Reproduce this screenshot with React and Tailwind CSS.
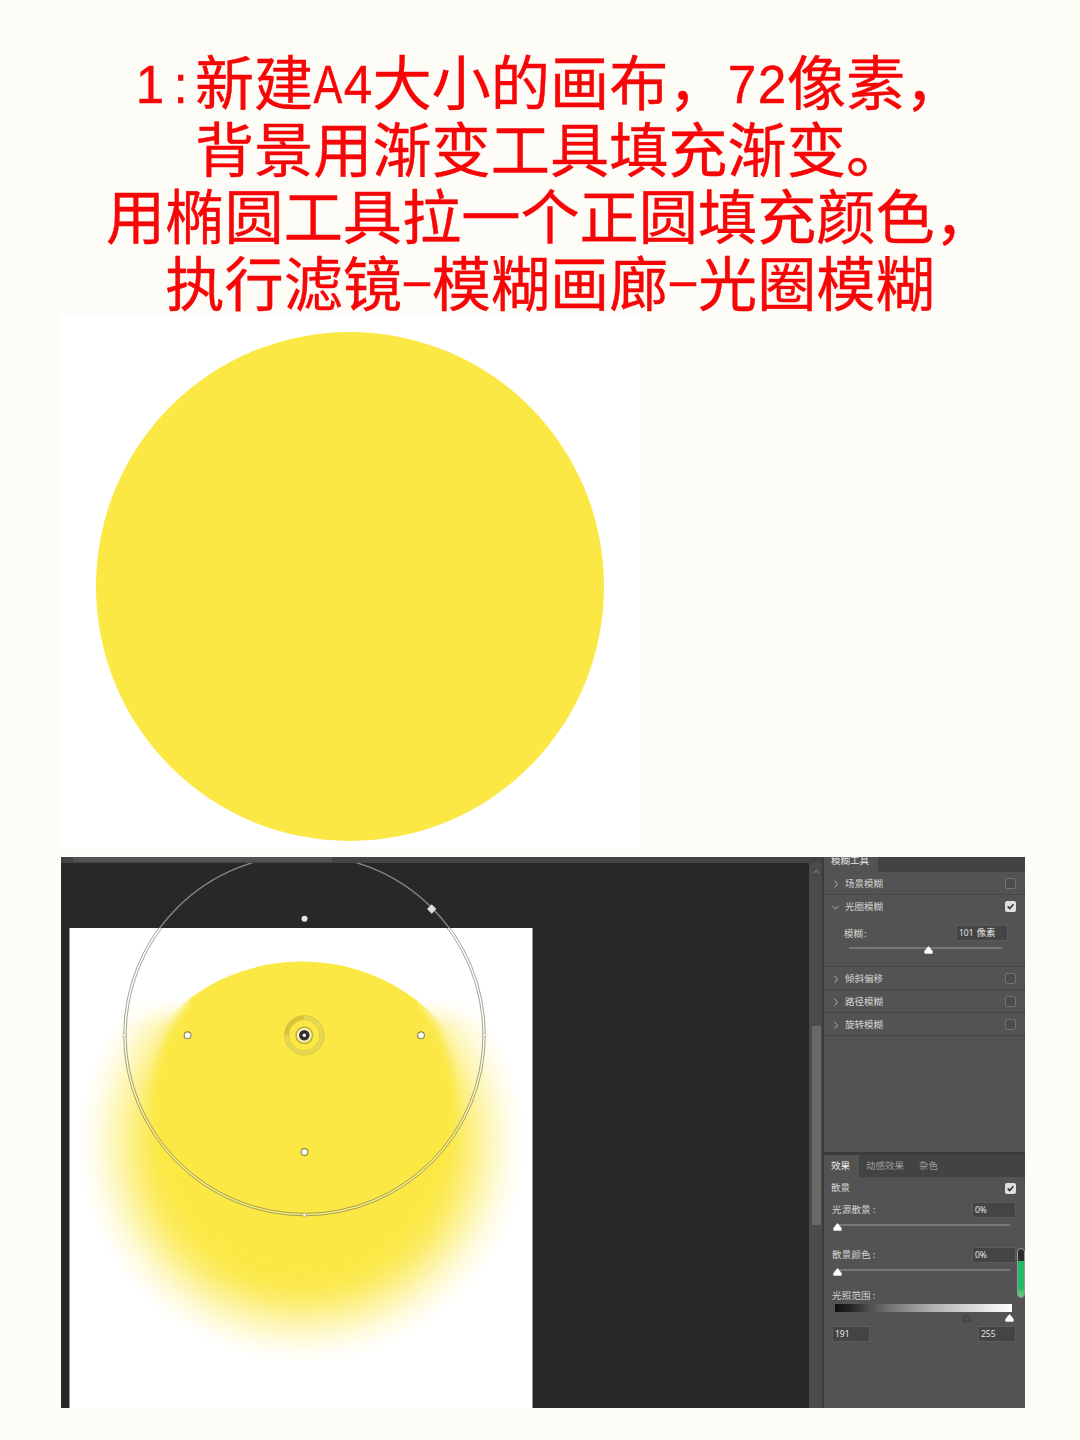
import React from "react";

function Half({ children, wide, dash }) {
  return (
    <span className="inline-flex w-[29.6px] justify-center font-['Liberation_Sans',sans-serif] text-[54px]">
      <span
        className={
          dash
            ? "inline-block -translate-y-[6px] scale-x-[1.95] scale-y-[0.85]"
            : wide
              ? "inline-block -translate-y-[2px] scale-x-[0.8]"
              : "inline-block -translate-y-[2px] scale-x-[0.95]"
        }
      >
        {children}
      </span>
    </span>
  );
}

function Line({ children }) {
  return <div className="flex h-[67px] items-baseline justify-center whitespace-nowrap">{children}</div>;
}

function Title() {
  return (
    <h1 className="ml-[20px] h-[268px] text-[59.2px] leading-[67px] font-normal text-[#f60606] [-webkit-text-stroke:0.4px_#f60606]">
      <Line>
        <Half>1</Half><Half>:</Half>新建<Half wide>A</Half><Half>4</Half>大小的画布，<Half>7</Half><Half>2</Half>像素，
      </Line>
      <Line>背景用渐变工具填充渐变。</Line>
      <Line>用椭圆工具拉一个正圆填充颜色，</Line>
      <Line>
        执行滤镜<Half dash>-</Half>模糊画廊<Half dash>-</Half>光圈模糊
      </Line>
    </h1>
  );
}

function Artwork() {
  return (
    <svg className="block h-[545px] w-[748px]" viewBox="61 863 748 545">
      <defs>
        <filter id="soft" x="-20%" y="-20%" width="140%" height="140%"><feGaussianBlur stdDeviation="4" /></filter>
        <radialGradient id="halo">
          <stop offset="0.58" stopColor="#fbe845" />
          <stop offset="0.66" stopColor="#fbe845" stopOpacity="0.93" />
          <stop offset="0.72" stopColor="#fbe845" stopOpacity="0.78" />
          <stop offset="0.78" stopColor="#fbe845" stopOpacity="0.57" />
          <stop offset="0.84" stopColor="#fbe845" stopOpacity="0.36" />
          <stop offset="0.9" stopColor="#fbe845" stopOpacity="0.18" />
          <stop offset="0.95" stopColor="#fbe845" stopOpacity="0.07" />
          <stop offset="1" stopColor="#fbe845" stopOpacity="0" />
        </radialGradient>
        <linearGradient id="fade" x1="0" y1="997" x2="0" y2="1026" gradientUnits="userSpaceOnUse">
          <stop offset="0" stopColor="#000" />
          <stop offset="1" stopColor="#fff" />
        </linearGradient>
        <mask id="lower" maskUnits="userSpaceOnUse" x="61" y="863" width="748" height="545">
          <rect x="61" y="863" width="748" height="545" fill="url(#fade)" />
        </mask>
        <mask id="focus" maskUnits="userSpaceOnUse" x="61" y="863" width="748" height="545">
          <ellipse cx="304" cy="1107" rx="152" ry="166" fill="#fff" filter="url(#soft)" />
          <rect x="190" y="940" width="228" height="75" fill="#fff" />
        </mask>
        <clipPath id="page"><rect x="69.5" y="928" width="463" height="480" /></clipPath>
        <clipPath id="dark"><rect x="61" y="863" width="748" height="65" /></clipPath>
      </defs>
      <rect x="61" y="863" width="748" height="545" fill="#282828" />
      <rect x="69.5" y="928" width="463" height="480" fill="#fff" />
      <g mask="url(#lower)">
        <ellipse cx="302" cy="1142" rx="224" ry="221" fill="url(#halo)" />
      </g>
      <g mask="url(#focus)">
        <circle cx="302" cy="1150" r="188.5" fill="#fbe845" />
      </g>
      <circle cx="304.5" cy="1035" r="180" fill="none" stroke="#868686" strokeWidth="1.4" clipPath="url(#dark)" />
      <g clipPath="url(#page)" fill="none">
        <circle cx="304.5" cy="1035" r="179.5" stroke="#fff" strokeOpacity=".25" strokeWidth="2" />
        <circle cx="304.5" cy="1035" r="180.8" stroke="#77775f" strokeOpacity=".75" strokeWidth=".9" />
        <circle cx="304.5" cy="1035" r="178.4" stroke="#77775f" strokeOpacity=".75" strokeWidth=".9" />
      </g>
      {[[124.5, 1035], [484.5, 1035], [304.5, 1215]].map(([x, y]) => (
        <circle key={x} cx={x} cy={y} r="1.7" fill="#fff" stroke="#99967a" strokeWidth=".5" />
      ))}
      <rect x="428.4" y="905.7" width="6.6" height="6.6" fill="#dedede" transform="rotate(45 431.7 909)" />
      <circle cx="304.5" cy="918.7" r="3" fill="#e4e4e4" />
      {[[187.6, 1035.3], [421, 1035.3], [304.5, 1152]].map(([x, y]) => (
        <circle key={x} cx={x} cy={y} r="3.4" fill="#fff" stroke="#8d8748" strokeWidth="1.1" />
      ))}
      <circle cx="304.3" cy="1035.3" r="17.7" fill="none" stroke="#e6d755" strokeWidth="4" />
      <path d="M286.6 1035.3A17.7 17.7 0 0 1 304.3 1017.6" fill="none" stroke="#d9c53b" strokeWidth="4" />
      <circle cx="304.3" cy="1035.3" r="19.7" fill="none" stroke="#bda932" strokeOpacity=".5" strokeWidth=".8" />
      <circle cx="304.3" cy="1035.3" r="15.5" fill="none" stroke="#bda932" strokeOpacity=".5" strokeWidth=".8" />
      <circle cx="304.3" cy="1035.3" r="9" fill="#a8982c" fillOpacity=".7" />
      <circle cx="304.3" cy="1035.3" r="7.3" fill="#fff8cf" />
      <circle cx="304.3" cy="1035.3" r="5.3" fill="#33312a" />
      <circle cx="304.3" cy="1035.3" r="1.7" fill="#fff" />
    </svg>
  );
}

function Check({ on }) {
  return on ? (
    <span className="flex size-[11px] shrink-0 items-center justify-center rounded-[2px] bg-[#e0e0e0]">
      <svg className="size-[9px]" viewBox="0 0 9 9"><path d="M1.7 4.4l2 2.1 3.7-4.2" fill="none" stroke="#333" strokeWidth="1.6" /></svg>
    </span>
  ) : (
    <span className="size-[11px] shrink-0 rounded-[2px] border border-[#737373] bg-[#4c4c4c]" />
  );
}

function Row({ label, on, open }) {
  return (
    <div className="flex h-[22px] items-center pt-px pr-[9px] pl-[8px]">
      <svg className="size-[8px] shrink-0" viewBox="0 0 8 8">
        <path d={open ? "M.4 3l3 3 3-3" : "M2.5 .8l3 3.4-3 3.4"} fill="none" stroke="#b0b0b0" />
      </svg>
      <span className="ml-[5px] flex-1 -translate-y-[1.5px]">{label}</span>
      <Check on={on} />
    </div>
  );
}

function Thumb({ hollow }) {
  return (
    <svg className="block h-[8px] w-[9px]" viewBox="0 0 9 8">
      <path d="M4.5 .6L8.2 5v2.3H.8V5z" fill={hollow ? "#505050" : "#fff"} stroke={hollow ? "#333" : "#fff"} strokeWidth=".8" strokeLinejoin="round" />
    </svg>
  );
}

function Field({ children, className }) {
  return (
    <span className={"flex h-[16px] items-center border border-[#5b5b5b] bg-[#444] pl-[2px] font-['Noto_Sans','Noto_Sans_CJK_SC',sans-serif] text-[8.5px] text-[#e4e4e4] " + className}>
      {children}
    </span>
  );
}

function Slider({ label }) {
  return (
    <div className="h-[45px] shrink-0">
      <div className="flex h-[16px] items-center justify-between pr-[9px] pl-[8px]">
        <span className="-translate-y-px tracking-[0.2px]">{label}<span className="ml-[2px]">:</span></span>
        <Field className="w-[44px]">0%</Field>
      </div>
      <div className="relative mt-[6px] ml-[12px] h-[2px] w-[174px] bg-[#777]">
        <span className="absolute -top-[1.5px] -left-[3px]"><Thumb /></span>
      </div>
    </div>
  );
}

function Panel() {
  return (
    <aside className="relative flex w-[201px] flex-col bg-[#535353]">
      <div className="flex h-[15px] shrink-0 bg-[#434343]">
        <div className="h-full w-[54px] overflow-hidden bg-[#535353] pl-[7px] leading-[7px] text-[#e2e2e2]">模糊工具</div>
      </div>
      <Row label="场景模糊" />
      <div className="h-px bg-[#474747]" />
      <Row label="光圈模糊" on open />
      <div className="flex h-[49px] flex-col pt-[7px]">
        <div className="flex h-[17px] items-center justify-between pr-[17px] pl-[20px]">
          <span>模糊<span className="ml-[1px]">:</span></span>
          <Field className="w-[52px]"><span className="mr-[3px]">101</span><span className="text-[9.5px]">像素</span></Field>
        </div>
        <div className="relative mt-[6px] ml-[25px] h-[2px] w-[153px] bg-[#777]">
          <span className="absolute -top-px left-[75px]"><Thumb /></span>
        </div>
      </div>
      <div className="h-px bg-[#474747]" />
      <Row label="倾斜偏移" />
      <div className="h-px bg-[#474747]" />
      <Row label="路径模糊" />
      <div className="h-px bg-[#474747]" />
      <Row label="旋转模糊" />
      <div className="h-px bg-[#474747]" />
      <div className="h-[116px]" />
      <div className="h-[3px] bg-[#3b3b3b]" />
      <div className="flex h-[22px] items-center bg-[#434343] pb-[2px] text-[#9b9b9b]">
        <span className="-mb-[2px] flex h-[22px] w-[35px] items-center bg-[#535353] pb-[2px] pl-[7px] text-[#ececec]">效果</span>
        <span className="ml-[7px]">动感效果</span>
        <span className="ml-[15px]">杂色</span>
      </div>
      <div className="flex h-[25px] items-center justify-between pr-[9px] pb-[3px] pl-[7px]">
        <span className="-translate-y-px">散景</span>
        <Check on />
      </div>
      <Slider label="光源散景" />
      <Slider label="散景颜色" />
      <div className="h-[12px] shrink-0 pl-[8px] leading-[6px] tracking-[0.2px]">光照范围<span className="ml-[2px]">:</span></div>
      <div className="ml-[11px] h-[8px] w-[177px] shrink-0 bg-[linear-gradient(90deg,#111_0%,#222_8%,#505050_20%,#777_32%,#b0b0b0_55%,#fff_100%)]" />
      <div className="ml-[138px] flex h-[10px] w-[55px] shrink-0 justify-between pt-[2px] pr-[3px]"><Thumb hollow /><Thumb /></div>
      <div className="mt-[4px] flex shrink-0 justify-between pr-[9px] pl-[8px]">
        <Field className="w-[38px]">191</Field>
        <Field className="w-[38px]">255</Field>
      </div>
      <div className="absolute top-[391px] right-0 flex h-[50px] w-[8px] flex-col overflow-hidden rounded-[4px] border border-[#999] bg-[#2c2c2c]">
        <span className="mt-[12px] flex-1 bg-gradient-to-b from-[#24b866] from-75% to-[#73cf7d]" />
      </div>
    </aside>
  );
}

function Editor() {
  return (
    <section className="ml-[61px] flex h-[551px] w-[964px] overflow-hidden text-[9.5px] leading-[14px] text-[#d4d4d4]">
      <div className="w-[748px]">
        <div className="h-[6px] bg-[#434343] pl-[12px]"><div className="h-[5px] w-[259px] bg-[#525252]" /></div>
        <Artwork />
      </div>
      <div className="flex w-[13px] flex-col items-center border-t-[6px] border-[#434343] bg-[#4b4b4b]">
        <svg className="mt-[6px] ml-[2px] h-[5px] w-[7px]" viewBox="0 0 7 5"><path d="M1 4l2.5-2.7L6 4" fill="none" stroke="#888" /></svg>
        <div className="mt-[152px] ml-[1px] h-[199px] w-[9px] bg-[#686868]" />
      </div>
      <div className="w-[2px] bg-[#3b3b3b]" />
      <Panel />
    </section>
  );
}

export default function App() {
  return (
    <main className="h-[1440px] w-[1080px] overflow-hidden bg-[#fdfcf7] pt-[46px] font-['Noto_Sans_CJK_SC',sans-serif]">
      <Title />
      <div className="mb-[9px] ml-[61px] h-[534px] w-[579px] bg-white pt-[18px] pl-[34.5px]">
        <div className="size-[508.5px] rounded-full bg-[#fbe845]" />
      </div>
      <Editor />
    </main>
  );
}
